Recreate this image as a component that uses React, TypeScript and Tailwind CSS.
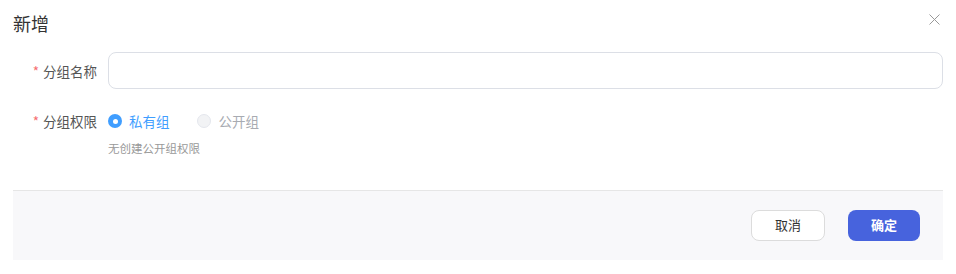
export default function App() {
  return (
    <div
      className="w-[956px] h-[274px] bg-white text-[#333]"
      style={{ fontFamily: '"Noto Sans CJK SC", "Noto Sans", sans-serif' }}
    >
      <div className="flex items-start justify-between px-[13px] pt-[11px]">
        <h2 className="text-[18px] leading-[24px] text-[#333]">新增</h2>
        <button className="mt-[3px] mr-[3px] text-[#999]">
          <svg width="11" height="11" viewBox="0 0 11 11" fill="none">
            <path d="M0.5 0.5L10.5 10.5M10.5 0.5L0.5 10.5" stroke="currentColor" strokeWidth="1" />
          </svg>
        </button>
      </div>

      <div className="px-[13px] pt-[17px]">
        <div className="flex items-center">
          <label className="w-[84px] text-right text-[13.5px] leading-[20px] text-[#555]">
            <span className="text-[#f56c6c] mr-[4px]">*</span>分组名称
          </label>
          <input
            className="ml-[11px] flex-1 h-[37px] rounded-[8px] border border-[#dcdfe6] outline-none px-3 text-[13px]"
            type="text"
          />
        </div>

        <div className="flex items-start mt-[21px]">
          <label className="w-[84px] text-right text-[13.5px] leading-[22px] text-[#555]">
            <span className="text-[#f56c6c] mr-[4px]">*</span>分组权限
          </label>
          <div className="ml-[11px]">
            <div className="flex items-center h-[22px]">
              <span className="flex items-center">
                <span className="flex items-center justify-center w-[14px] h-[14px] rounded-full bg-[#409eff]">
                  <span className="w-[5px] h-[5px] rounded-full bg-white" />
                </span>
                <span className="ml-[7px] text-[13.5px] text-[#409eff]">私有组</span>
              </span>
              <span className="flex items-center ml-[27px]">
                <span className="w-[14px] h-[14px] rounded-full bg-[#f2f3f5] border border-[#e4e7ed]" />
                <span className="ml-[8px] text-[13.5px] text-[#a8abb2]">公开组</span>
              </span>
            </div>
            <p className="mt-[7px] text-[11.5px] leading-[18px] text-[#999]">无创建公开组权限</p>
          </div>
        </div>
      </div>

      <div className="mx-[13px] mt-[33px] h-[70px] border-t border-[#e6e6e6] bg-[#f8f8fa] flex items-center justify-end gap-[23px] pr-[23px] pb-[1px]">
        <button className="w-[74px] h-[31px] rounded-[8px] border border-[#dcdcdc] bg-white text-[13px] text-[#333]">
          取消
        </button>
        <button className="w-[72px] h-[31px] rounded-[8px] bg-[#4763dd] text-[13px] font-bold text-white">
          确定
        </button>
      </div>
    </div>
  );
}
